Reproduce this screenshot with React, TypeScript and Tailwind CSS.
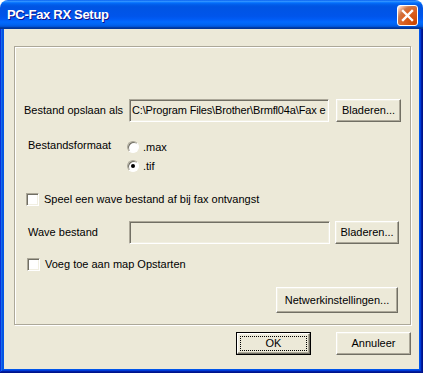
import React from "react";

const font = "font-['Liberation_Sans',Arial,sans-serif] text-[11px] text-black";

const raised =
  "bg-[#ece9d8] border border-t-white border-l-white border-r-[#716f64] border-b-[#716f64] shadow-[inset_-1px_-1px_0_#aca899,inset_1px_1px_0_#f1efe2]";

const sunken =
  "bg-[#ece9d8] border border-t-[#aca899] border-l-[#aca899] border-r-white border-b-white shadow-[inset_1px_1px_0_#716f64,inset_-1px_-1px_0_#f1efe2]";

const Button = ({ label, className }: { label: string; className: string }) => (
  <div className={`${raised} ${className} flex items-center justify-center`}>{label}</div>
);

const Radio = ({ checked }: { checked?: boolean }) => (
  <div className="w-[12px] h-[12px] rounded-full bg-white border border-t-[#aca899] border-l-[#aca899] border-r-white border-b-white shadow-[inset_1px_1px_0_#716f64] flex items-center justify-center">
    {checked && <div className="w-[4px] h-[4px] rounded-full bg-black" />}
  </div>
);

const Checkbox = () => (
  <div className="w-[13px] h-[13px] bg-white border border-t-[#aca899] border-l-[#aca899] border-r-white border-b-white shadow-[inset_1px_1px_0_#716f64,inset_-1px_-1px_0_#f1efe2]" />
);

export default function App() {
  return (
    <div className={`w-[423px] h-[373px] flex flex-col rounded-t-[8px] overflow-hidden ${font}`}>
      {/* title bar */}
      <div className="h-[29px] flex items-center justify-between pl-[7px] pr-[5px] bg-[linear-gradient(to_bottom,#0058ee_0%,#3593ff_4%,#288eff_6%,#127dff_8%,#036ffc_10%,#0262ee_14%,#0057e5_20%,#0054e3_24%,#0055eb_56%,#005bf5_66%,#026afe_76%,#0062ef_86%,#0052d6_92%,#0040ab_94%,#003092_100%)]">
        <span className="text-white font-bold text-[13px] tracking-[-0.3px] [text-shadow:1px_1px_#0f1089] pt-[1px]">
          PC-Fax RX Setup
        </span>
        <div className="w-[21px] h-[21px] mt-[1px] rounded-[3px] border border-white bg-[radial-gradient(circle_at_90%_90%,#cc4600_0%,#dc6527_55%,#cd7546_70%,#ffccb2_90%,#fff_100%)] flex items-center justify-center">
          <svg width="13" height="13" viewBox="0 0 13 13">
            <path d="M2 2 L11 11 M11 2 L2 11" stroke="white" strokeWidth="2.4" strokeLinecap="square" />
          </svg>
        </div>
      </div>

      {/* frame */}
      <div className="flex-1 flex flex-col px-[4px] pb-[4px] bg-[#0055ea] shadow-[inset_-1px_-1px_#00138c,inset_1px_0_#0831d9,inset_-2px_-2px_#001ea0,inset_2px_0_#166aee,inset_-3px_-3px_#003bda,inset_3px_0_#0855dd]">
        <div className="flex-1 bg-[#ece9d8] flex flex-col">
          {/* group box */}
          <div className="ml-[10px] mt-[17px] w-[397px] h-[279px] border border-[#aca899] shadow-[1px_1px_0_#fff,inset_1px_1px_0_#fff] flex flex-col">
            <div className="mt-[52px] h-[23px] flex items-center">
              <span className="w-[114px] pl-[9px]">Bestand opslaan als</span>
              <div className={`${sunken} w-[200px] h-[23px] flex items-center pl-[2px] overflow-hidden whitespace-nowrap tracking-[-0.15px]`}>
                {"C:\\Program Files\\Brother\\Brmfl04a\\Fax e"}
              </div>
              <Button label="Bladeren..." className="ml-[7px] w-[65px] h-[23px]" />
            </div>

            <div className="mt-[19px] flex">
              <span className="w-[112px] pl-[13px] -mt-[4px]">Bestandsformaat</span>
              <div className="flex flex-col gap-[7px]">
                <div className="flex items-center gap-[4px] h-[12px]">
                  <Radio />
                  <span>.max</span>
                </div>
                <div className="flex items-center gap-[4px] h-[12px]">
                  <Radio checked />
                  <span>.tif</span>
                </div>
              </div>
            </div>

            <div className="mt-[21px] pl-[11px] flex items-center gap-[5px] h-[13px]">
              <Checkbox />
              <span>Speel een wave bestand af bij fax ontvangst</span>
            </div>

            <div className="mt-[15px] h-[23px] flex items-center">
              <span className="w-[114px] pl-[13px]">Wave bestand</span>
              <div className={`${sunken} w-[201px] h-[23px]`} />
              <Button label="Bladeren..." className="ml-[5px] w-[64px] h-[23px]" />
            </div>

            <div className="mt-[14px] pl-[12px] flex items-center gap-[5px] h-[13px]">
              <Checkbox />
              <span>Voeg toe aan map Opstarten</span>
            </div>

            <div className="mt-[16px] flex justify-end pr-[12px]">
              <Button label="Netwerkinstellingen..." className="w-[122px] h-[26px]" />
            </div>
          </div>

          {/* bottom buttons */}
          <div className="mt-[7px] flex justify-end gap-[25px] pr-[8px]">
            <div className="w-[75px] h-[23px] border border-black">
              <div className={`${raised} w-full h-full p-[2px]`}>
                <div className="w-full h-full border border-dotted border-black flex items-center justify-center">
                  OK
                </div>
              </div>
            </div>
            <Button label="Annuleer" className="w-[75px] h-[23px]" />
          </div>
        </div>
      </div>
    </div>
  );
}
